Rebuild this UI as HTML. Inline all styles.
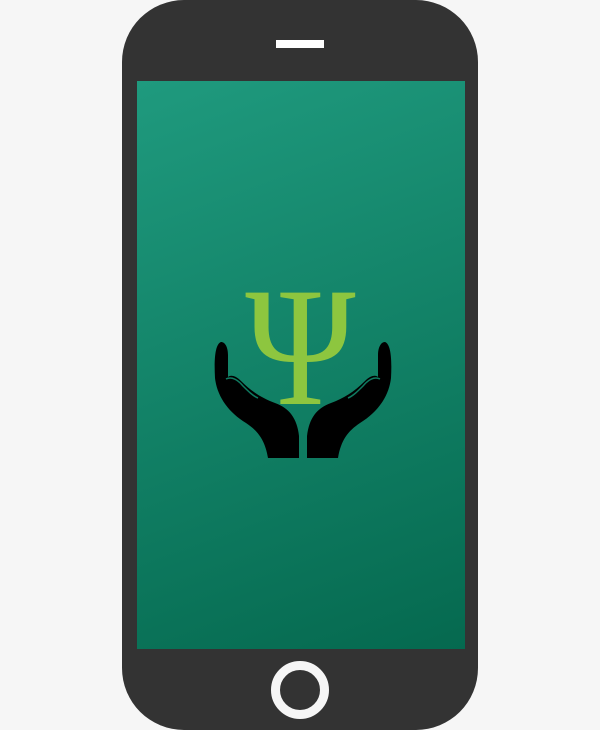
<!DOCTYPE html><html><head><style>
html,body{margin:0;width:600px;height:730px;overflow:hidden}
body{background:#f6f6f6;position:relative;font-family:"Liberation Serif",serif}
.ph{position:absolute;left:122px;top:0;width:356px;height:730px;background:#333;border-radius:62px}
.sp{position:absolute;left:276px;top:40px;width:48px;height:8px;background:#fff}
.sc{position:absolute;left:137px;top:81px;width:328px;height:568px;background:linear-gradient(160deg,#1f9a7e,#05694f)}
.hb{position:absolute;left:271px;top:661px;width:40px;height:40px;border:9px solid #f6f6f6;border-radius:50%}
.psi{position:absolute;left:0;width:600px;top:262px;text-align:center;font-size:170px;line-height:170px;color:#8dc63f;transform:scaleX(0.88);transform-origin:303px 0}
</style></head><body>
<div class="ph"></div><div class="sp"></div><div class="sc"></div><div class="hb"></div>
<div class="psi">Ψ</div>
<svg width="600" height="730" style="position:absolute;left:0;top:0">
<g id="h" fill="#000">
<path d="M221 342 C215 344 214 360 215 378 C217 396 228 412 246 423 C258 431 265 440 268 458 L299 458 L299 436 C297 418 289 408 275 403 C262 398 252 392 241 381 C235 375 230 375 228 377 L228 355 C228 347 225 342 221 342 Z"/>
<path d="M226 379 C232 376 238 380 243 386 C248 391 253 396 258 398" stroke="#0f7a60" stroke-width="1.5" fill="none"/>
</g>
<use href="#h" transform="translate(606 0) scale(-1 1)"/>
</svg>
</body></html>
